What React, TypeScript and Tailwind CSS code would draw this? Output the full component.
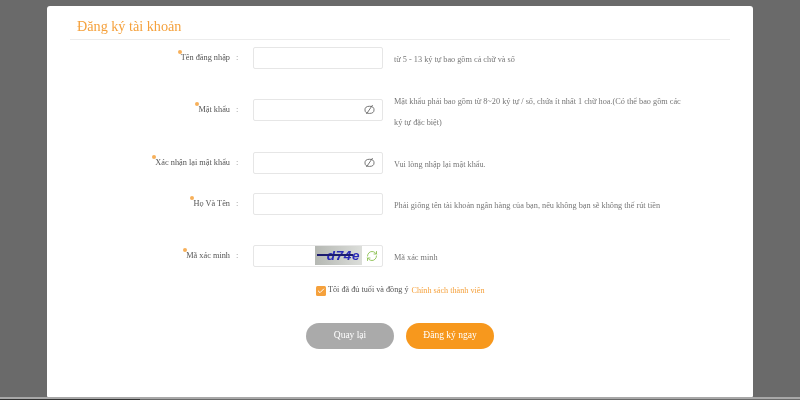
import { Check, RefreshCw } from "lucide-react";

const rows = [
  { label: "Tên đăng nhập", hint: ["từ 5 - 13 ký tự bao gồm cả chữ và số"], h: "h-[52px]", eye: false, top: "mt-[2px]" },
  {
    label: "Mật khẩu",
    hint: ["Mật khẩu phải bao gồm từ 8~20 ký tự / số, chứa ít nhất 1 chữ hoa.(Có thể bao gồm các", "ký tự đặc biệt)"],
    h: "h-[53px]",
    eye: true,
    top: "-mt-[8px]",
  },
  { label: "Xác nhận lại mật khẩu", hint: ["Vui lòng nhập lại mật khẩu."], h: "h-[41px]", eye: true, top: "mt-[2px]" },
  { label: "Họ Và Tên", hint: ["Phải giống tên tài khoản ngân hàng của bạn, nếu không bạn sẽ không thể rút tiền"], h: "h-[52px]", eye: false, top: "mt-[2px]" },
];

function Label({ text }: { text: string }) {
  return (
    <div className="flex w-[183px] justify-end text-[8.3px] leading-[22px] text-[#555]">
      <span className="relative">
        <span className="absolute top-[3px] -left-[3px] h-[4px] w-[4px] rounded-full bg-[#f7b05a]" />
        {text}
      </span>
      <span className="ml-[6px] w-[17px] text-[#888]">:</span>
    </div>
  );
}

function Eye() {
  return (
    <svg viewBox="0 0 16 16" className="h-[11px] w-[11px] text-[#666]" fill="none" stroke="currentColor" strokeWidth="1.3">
      <ellipse cx="8" cy="8.5" rx="6.6" ry="5.2" />
      <path d="M3.5 14.5 12.5 1.5" />
    </svg>
  );
}

export default function App() {
  return (
    <div className="flex h-[400px] w-[800px] flex-col overflow-hidden bg-[#6a6a6a] pt-1.5 font-['Liberation_Serif',serif] blur-[0.3px]">
      <div className="mx-auto h-[390.5px] w-[706px] shrink-0 rounded-t-[3px] rounded-b-[1px] bg-white px-[23px]">
        <div className="flex h-[34px] items-end border-b border-[#ececec] pb-[4px] pl-[7px] text-[14.2px] leading-[18px] text-[#f5a13c]">
          Đăng ký tài khoản
        </div>
        <div className="mt-[6.5px] flex flex-col">
          {rows.map((r) => (
            <div key={r.label} className={`flex ${r.h}`}>
              <Label text={r.label} />
              <div className="flex h-[22px] w-[130px] shrink-0 items-center justify-end rounded-[2px] border border-[#e6e6e6] pr-[7px]">
                {r.eye && <Eye />}
              </div>
              <div className={`ml-[11px] flex flex-col text-[8.25px] leading-[21px] text-[#777] ${r.top}`}>
                {r.hint.map((t) => (
                  <span key={t}>{t}</span>
                ))}
              </div>
            </div>
          ))}
          <div className="flex h-[36px]">
            <Label text="Mã xác minh" />
            <div className="flex h-[22px] w-[130px] shrink-0 items-center rounded-[2px] border border-[#e6e6e6] pl-[61px]">
              <div className="relative flex h-[19px] w-[47px] items-center justify-end bg-gradient-to-r from-[#b5b8b3] to-[#dcdeda] pr-[2px] font-['Liberation_Sans',sans-serif] text-[13.5px] leading-[19px] font-bold tracking-[0.6px] text-[#2a2ab8] italic">
                d74e
                <span className="absolute top-[8px] left-[2px] h-[1.5px] w-[36px] bg-[#1c1c70]" />
              </div>
              <RefreshCw className="ml-[4px] h-[12px] w-[12px] text-[#8cc152]" strokeWidth={1.8} />
            </div>
            <div className="mt-[2px] ml-[11px] text-[8.25px] leading-[21px] text-[#777]">Mã xác minh</div>
          </div>
          <div className="ml-[246px] flex h-[20px] items-center text-[8.2px]">
            <span className="flex h-[10px] w-[10px] items-center justify-center rounded-[1.5px] bg-[#f5a13c]">
              <Check className="h-[8px] w-[8px] text-white" strokeWidth={3} />
            </span>
            <span className="ml-[2px] text-[#555]">Tôi đã đủ tuổi và đồng ý</span>
            <span className="mt-[2px] ml-[3px] text-[#f5a13c]">Chính sách thành viên</span>
          </div>
          <div className="mt-[22px] ml-[236px] flex gap-3">
            <button className="h-[26px] w-[88px] rounded-full bg-[#aaaaaa] text-[9.5px] text-white">Quay lại</button>
            <button className="h-[26px] w-[88px] rounded-full bg-[#f7981d] text-[9.5px] text-white">Đăng ký ngay</button>
          </div>
        </div>
      </div>
      <div className="h-[2.5px] w-full shrink-0 bg-[#a8a8a8]" />
      <div className="h-[1px] w-[140px] shrink-0 bg-[#333]" />
    </div>
  );
}
